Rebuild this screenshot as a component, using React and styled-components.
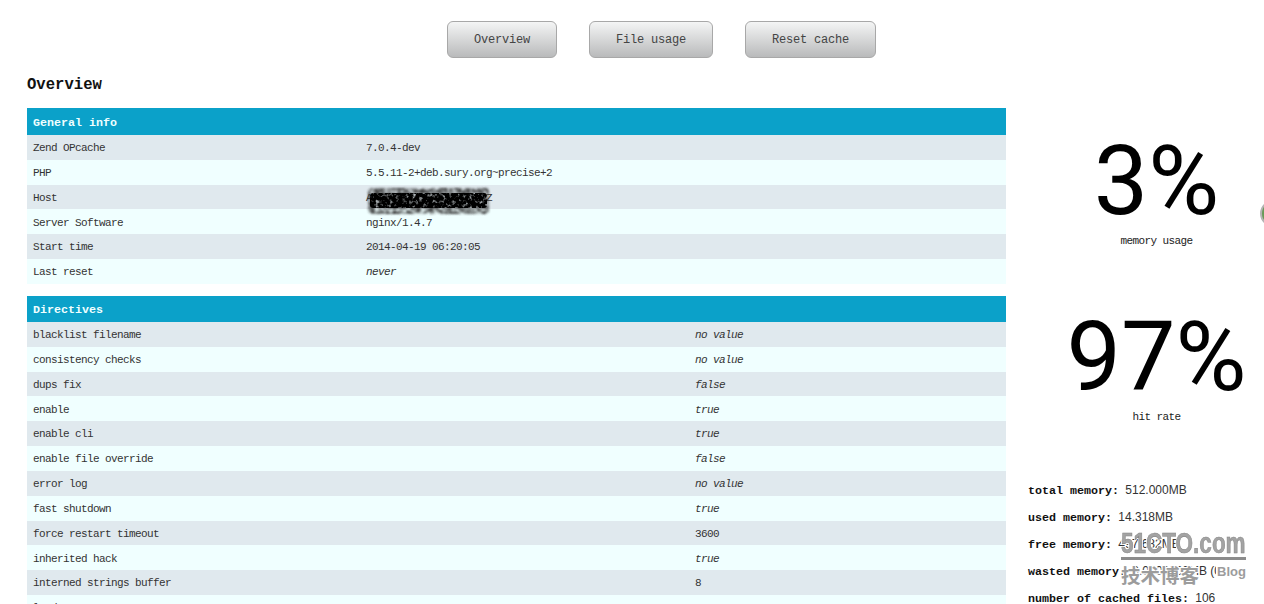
import React from 'react';
import styled, { createGlobalStyle } from 'styled-components';

const Global = createGlobalStyle`
  html, body { margin: 0; padding: 0; height: 604px; overflow: hidden; background: #fff; }
  body { font-family: "Liberation Mono", monospace; font-size: 11px; letter-spacing: -0.6px; color: #222; }
`;
const Page = styled.div`
  position: relative;
  width: 1264px;
  height: 604px;
  overflow: hidden;
  padding: 21px 0 0 27px;
  box-sizing: border-box;
`;
const Nav = styled.nav`
  display: flex;
  gap: 32px;
  margin-left: 420px;
  height: 37px;
`;
const NavButton = styled.a`
  box-sizing: border-box;
  width: ${p => p.$w}px;
  height: 37px;
  display: flex;
  align-items: center;
  justify-content: center;
  border: 1px solid #a8a8a8;
  border-radius: 6px;
  background: linear-gradient(#f4f5f5, #b9babb);
  font-size: 12px;
  letter-spacing: -0.2px;
  color: #444;
`;
const Title = styled.h1`
  margin: 17px 0 13px;
  height: 20px;
  line-height: 20px;
  font-size: 15.6px;
  letter-spacing: 0;
  font-weight: bold;
  color: #111;
`;
const Body = styled.div`
  display: flex;
  align-items: flex-start;
`;
const Main = styled.div`
  width: 979px;
  flex: none;
`;
const Section = styled.section`
  margin-bottom: 12px;
`;
const Header = styled.div`
  box-sizing: border-box;
  height: ${p => p.$h}px;
  line-height: ${p => p.$h}px;
  padding: 1.5px 0 0 6px;
  background: #0ba1c9;
  color: #f0ffff;
  font-weight: bold;
  font-size: 11.67px;
  letter-spacing: 0;
`;
const Row = styled.div`
  box-sizing: border-box;
  display: grid;
  grid-template-columns: ${p => p.$cols};
  height: 24.83px;
  line-height: 24.83px;
  padding: 1.1px 0 0 6px;
  background: ${p => (p.$alt ? '#f0ffff' : '#e0e9ee')};
  color: #333;
`;
const Value = styled.span`
  font-style: ${p => (p.$em ? 'italic' : 'normal')};
  position: relative;
  white-space: pre;
`;
const Scribble = styled.svg`
  position: absolute;
  left: 0;
  top: -2px;
  width: 126px;
  height: 32px;
`;
const Side = styled.aside`
  flex: none;
  width: 258px;
  margin-left: 22px;
  padding-top: 29px;
  box-sizing: border-box;
`;
const Gauge = styled.div`
  width: 257px;
  height: ${p => p.$h}px;
  display: flex;
  flex-direction: column;
  align-items: center;
`;
const Big = styled.div`
  font-family: Roboto, "Liberation Sans", sans-serif;
  font-size: 97px;
  line-height: 88px;
  letter-spacing: 0;
  color: #000;
`;
const Caption = styled.div`
  margin-top: 10px;
  font-size: 11px;
  line-height: 12px;
  color: #222;
`;
const Stats = styled.div`
  display: flex;
  flex-direction: column;
  padding-top: 3px;
`;
const Stat = styled.div`
  height: 27px;
  line-height: 27px;
  white-space: nowrap;
  font-family: "Liberation Sans", Arial, sans-serif;
  font-size: 12px;
  letter-spacing: 0;
  color: #333;
`;
const StatKey = styled.b`
  font-family: "Liberation Mono", monospace;
  font-size: 11.67px;
  font-weight: bold;
  color: #111;
  margin-right: 3px;
`;
const EdgeRing = styled.div`
  position: absolute;
  left: 1260px;
  top: 200px;
  width: 27px;
  height: 27px;
  box-sizing: border-box;
  border-radius: 50%;
  border: 2px solid #b4b4b4;
  background: #6a9a58;
  filter: blur(0.7px);
`;
const Watermark = styled.div`
  position: absolute;
  left: 1121px;
  top: 529px;
  width: 125px;
  font-family: "Liberation Sans", Arial, sans-serif;
  color: #9c9c9c;
  pointer-events: none;
`;
const MarkTop = styled.div`
  height: 28px;
  width: 165px;
  white-space: nowrap;
  font-size: 30px;
  line-height: 28px;
  font-weight: bold;
  letter-spacing: 0;
  color: #a3a3a3;
  -webkit-text-stroke: 0.6px #858585;
  text-shadow: 0 0 2px #fff, 1px 1px 0 #fff, -1px -1px 0 #fff, 1px -1px 0 #fff, -1px 1px 0 #fff;
  transform: scaleX(0.75);
  transform-origin: left center;
`;
const MarkRule = styled.div`
  height: 3px;
  background: #8c8c8c;
`;
const MarkBottom = styled.div`
  display: flex;
  justify-content: space-between;
  align-items: flex-start;
  margin-top: 3px;
  height: 24px;
  white-space: nowrap;
`;
const MarkCjk = styled.span`
  font-family: "Noto Sans CJK SC", sans-serif;
  font-size: 19.5px;
  font-weight: bold;
  line-height: 24px;
  letter-spacing: 0;
  text-shadow: 0 0 2px #fff, 1px 1px 0 #fff, -1px -1px 0 #fff, 1px -1px 0 #fff, -1px 1px 0 #fff;
`;
const MarkBlog = styled.span`
  padding-left: 1px;
  background: #fff;
  font-size: 13px;
  font-weight: bold;
  letter-spacing: 0;
  line-height: 18px;
`;

const general = [
  ['Zend OPcache', '7.0.4-dev'],
  ['PHP', '5.5.11-2+deb.sury.org~precise+2'],
  ['Host', 'A' + ' '.repeat(19) + 'Z', false, true],
  ['Server Software', 'nginx/1.4.7'],
  ['Start time', '2014-04-19 06:20:05'],
  ['Last reset', 'never', true],
];
const directives = [
  ['blacklist filename', 'no value', true],
  ['consistency checks', 'no value', true],
  ['dups fix', 'false', true],
  ['enable', 'true', true],
  ['enable cli', 'true', true],
  ['enable file override', 'false', true],
  ['error log', 'no value', true],
  ['fast shutdown', 'true', true],
  ['force restart timeout', '3600'],
  ['inherited hack', 'true', true],
  ['interned strings buffer', '8'],
  ['load comments', 'true', true],
];
const stats = [
  ['total memory:', '512.000MB'],
  ['used memory:', '14.318MB'],
  ['free memory:', '497.682MB'],
  ['wasted memory:', '0.0000000MB (0%)'],
  ['number of cached files:', '106'],
];

function Redaction() {
  return (
    <Scribble viewBox="0 0 126 32" aria-hidden="true">
      <defs>
        <filter id="soft" x="-5%" y="-25%" width="110%" height="150%">
          <feTurbulence type="fractalNoise" baseFrequency="0.22 0.32" numOctaves="3" seed="7" result="n" />
          <feColorMatrix in="n" type="matrix" values="0 0 0 0 0  0 0 0 0 0  0 0 0 0 0  0 0 0 2.2 -0.55" result="a" />
          <feComposite in="SourceGraphic" in2="a" operator="in" result="c" />
          <feGaussianBlur in="c" stdDeviation="1.1" />
        </filter>
        <filter id="dense" x="-5%" y="-25%" width="110%" height="150%">
          <feTurbulence type="fractalNoise" baseFrequency="0.3" numOctaves="2" seed="3" result="n" />
          <feColorMatrix in="n" type="matrix" values="0 0 0 0 0  0 0 0 0 0  0 0 0 0 0  0 0 0 4 -0.95" result="a" />
          <feComposite in="SourceGraphic" in2="a" operator="in" result="c" />
          <feGaussianBlur in="c" stdDeviation="0.7" />
        </filter>
      </defs>
      <rect x="2" y="4" width="121" height="26" rx="4" fill="#333" filter="url(#soft)" />
      <rect x="4" y="9" width="117" height="15" rx="3" fill="#000" filter="url(#dense)" />
    </Scribble>
  );
}

export default function App() {
  return (
    <Page>
      <Global />
      <Nav>
        <NavButton $w={110}>Overview</NavButton>
        <NavButton $w={124}>File usage</NavButton>
        <NavButton $w={131}>Reset cache</NavButton>
      </Nav>
      <Title>Overview</Title>
      <Body>
        <Main>
          <Section>
            <Header $h={27}>General info</Header>
            {general.map(([k, v, em, red], i) => (
              <Row key={k} $alt={i % 2 === 1} $cols="333px 1fr">
                <span>{k}</span>
                <Value $em={em}>{v}{red && <Redaction />}</Value>
              </Row>
            ))}
          </Section>
          <Section>
            <Header $h={26}>Directives</Header>
            {directives.map(([k, v, em], i) => (
              <Row key={k} $alt={i % 2 === 1} $cols="662px 1fr">
                <span>{k}</span>
                <Value $em={em}>{v}</Value>
              </Row>
            ))}
          </Section>
        </Main>
        <Side>
          <Gauge $h={176}>
            <Big>3%</Big>
            <Caption>memory usage</Caption>
          </Gauge>
          <Gauge $h={161}>
            <Big>97%</Big>
            <Caption>hit rate</Caption>
          </Gauge>
          <Stats>
            {stats.map(([k, v]) => (
              <Stat key={k}><StatKey>{k}</StatKey> {v}</Stat>
            ))}
          </Stats>
        </Side>
      </Body>
      <EdgeRing />
      <Watermark>
        <MarkTop>51CTO.com</MarkTop>
        <MarkRule />
        <MarkBottom>
          <MarkCjk>技术博客</MarkCjk>
          <MarkBlog>Blog</MarkBlog>
        </MarkBottom>
      </Watermark>
    </Page>
  );
}
